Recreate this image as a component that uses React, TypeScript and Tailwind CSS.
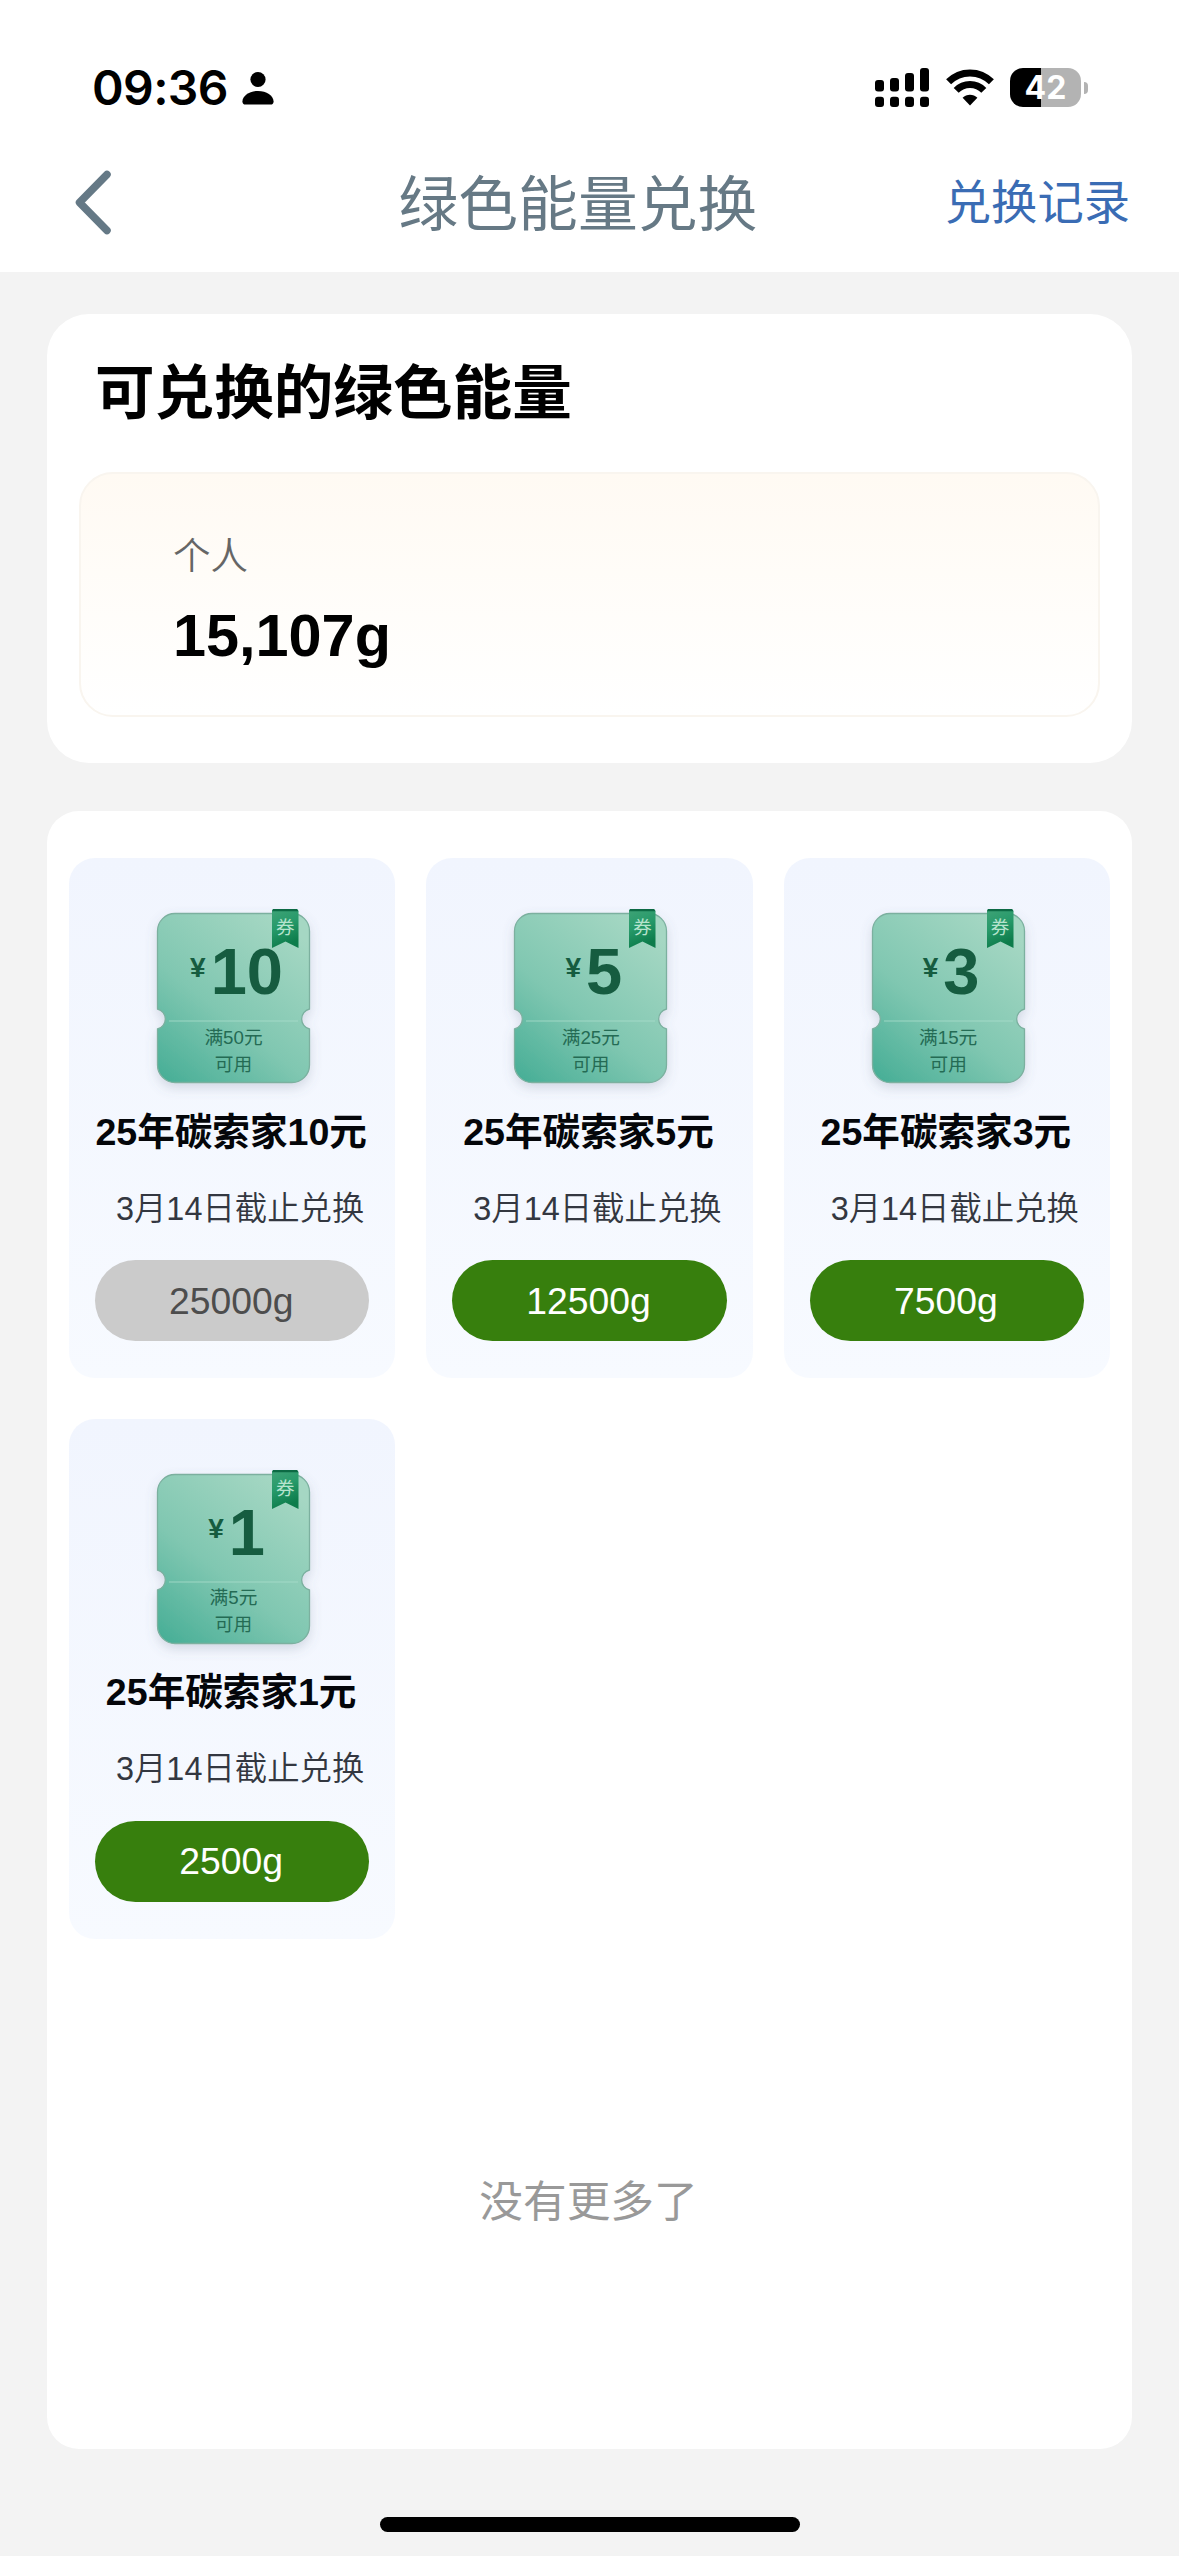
import React from 'react';

interface Coupon {
  id: number;
  amount: string;
  threshold: string;
  name: string;
  deadline: string;
  cost: string;
  disabled?: boolean;
}

const coupons: Coupon[] = [
  { id: 1, amount: '10', threshold: '满50元', name: '25年碳索家10元', deadline: '3月14日截止兑换', cost: '25000g', disabled: true },
  { id: 2, amount: '5', threshold: '满25元', name: '25年碳索家5元', deadline: '3月14日截止兑换', cost: '12500g' },
  { id: 3, amount: '3', threshold: '满15元', name: '25年碳索家3元', deadline: '3月14日截止兑换', cost: '7500g' },
  { id: 4, amount: '1', threshold: '满5元', name: '25年碳索家1元', deadline: '3月14日截止兑换', cost: '2500g' },
];

const StatusBar = () => (
  <div className="flex h-[140px] items-start justify-between pl-[92px] pr-[91px] pt-[63px]">
    <div className="flex items-center">
      <span className="font-['Inter'] text-[48px] font-semibold leading-[50px] tracking-[-0.6px] text-black">09:36</span>
      <svg className="ml-[14px]" width="32" height="36" viewBox="0 0 32 36">
        <circle cx="16" cy="9.5" r="7.6" fill="#000" />
        <path d="M3.5 34.5C1.5 34.5 0.4 33.4 0.4 31.4C0.8 25.6 7.4 21 16 21S31.2 25.6 31.6 31.4C31.6 33.4 30.5 34.5 28.5 34.5Z" fill="#000" />
      </svg>
    </div>
    <div className="flex items-start pt-[5px]">
      <svg width="54" height="40" viewBox="0 0 54 40">
        <rect x="0" y="12" width="9" height="11.5" rx="3" />
        <rect x="15" y="10" width="9" height="13.5" rx="3" />
        <rect x="30" y="5" width="9" height="18.5" rx="3" />
        <rect x="45" y="0" width="9" height="23.5" rx="3" />
        {[0, 15, 30, 45].map(x => (
          <rect key={x} x={x} y="28.7" width="9" height="10.3" rx="3" />
        ))}
      </svg>
      <svg className="ml-[17px]" width="48" height="40" viewBox="0 0 48 40" fill="none" stroke="#000" strokeWidth="7">
        <path d="M2.6 13.8C14.4 1.9 33.6 1.9 45.4 13.8" />
        <path d="M10.2 22.4C17.8 14.6 30.2 14.6 37.8 22.4" />
        <path d="M24 37.4L16.6 29.8C20.6 25.8 27.4 25.8 31.4 29.8Z" fill="#000" stroke="none" />
      </svg>
      <div className="ml-[16px] flex items-center">
        <div className="flex h-[39px] w-[71px] items-center justify-center rounded-[13px] bg-[linear-gradient(to_right,#000_44%,#b3b3b3_44%)]">
          <span className="font-['Inter'] text-[32px] font-bold leading-[39px] text-white">42</span>
        </div>
        <div className="ml-[3px] h-[12px] w-[4px] rounded-r-full bg-[#b3b3b3]" />
      </div>
    </div>
  </div>
);

const NavBar = () => (
  <div className="flex h-[132px] items-start justify-between pl-[74px] pr-[49px] pt-[24px]">
    <svg className="mt-[4px]" width="40" height="68" viewBox="0 0 40 68" fill="none" stroke="#657986" strokeWidth="7.5" strokeLinecap="round" strokeLinejoin="round">
      <path d="M33 6.5L5.5 34.5L33 62.5" />
    </svg>
    <h1 className="ml-[97px] mt-[2px] text-[59.8px] leading-[80px] text-[#667985]">绿色能量兑换</h1>
    <a className="text-[46.3px] leading-[78px] text-[#3a6cb4]">兑换记录</a>
  </div>
);

const Ticket = ({ amount, threshold }: { amount: string; threshold: string }) => (
  <div className="relative ml-[88px] h-[170px] w-[153px]">
    <svg className="absolute left-0 top-0 overflow-visible" width="153" height="170" viewBox="0 0 153 170">
      <defs>
        <linearGradient id="ticketFill" x1="0.05" y1="1" x2="0.75" y2="0">
          <stop offset="0" stopColor="#47ae96" />
          <stop offset="0.45" stopColor="#80c7b1" />
          <stop offset="1" stopColor="#a5d7c3" />
        </linearGradient>
        <linearGradient id="ribbonFill" x1="0" y1="0" x2="0.3" y2="1">
          <stop offset="0" stopColor="#3fa377" />
          <stop offset="0.5" stopColor="#279a6a" />
          <stop offset="1" stopColor="#0d7c4b" />
        </linearGradient>
        <filter id="ticketShadow" x="-20%" y="-20%" width="140%" height="150%">
          <feDropShadow dx="0" dy="5" stdDeviation="6" floodColor="#5b6b86" floodOpacity="0.22" />
        </filter>
      </defs>
      <path
        d="M18 0.5H135A17.5 17.5 0 0 1 152.5 18V96A10.3 10.3 0 0 0 152.5 116V152A17.5 17.5 0 0 1 135 169.5H18A17.5 17.5 0 0 1 0.5 152V116A10.3 10.3 0 0 0 0.5 96V18A17.5 17.5 0 0 1 18 0.5Z"
        fill="url(#ticketFill)"
        stroke="#7bb09f"
        strokeWidth="1.3"
        filter="url(#ticketShadow)"
      />
      <path d="M12 108H141" stroke="#a9dccb" strokeWidth="1.4" opacity="0.55" />
      <path d="M116 -4H140L141.5 -2V35L128.5 28.5L115 35V-2Z" fill="url(#ribbonFill)" />
      <path d="M116 -4H140L141.5 -1.8H115Z" fill="#0c6a44" />
    </svg>
    <span className="absolute left-[119px] top-[4px] text-[18.5px] leading-[22px] text-[#b5e3cd]">券</span>
    <div className="relative flex flex-col items-center pt-[26px] text-[#165c40]">
      <div className="ml-[6px] flex items-start font-bold">
        <span className="mt-[15px] text-[28px] leading-[28px]">¥</span>
        <span className="ml-[5px] text-[65px] leading-[66px]">{amount}</span>
      </div>
      <div className="mt-[18.5px] flex flex-col items-center text-[18.7px] leading-[27px] text-[#246b54]">
        <span>{threshold}</span>
        <span>可用</span>
      </div>
    </div>
  </div>
);

const CouponCard = ({ coupon }: { coupon: Coupon }) => (
  <div className="flex h-[520px] flex-col rounded-[26px] bg-gradient-to-b from-[#f1f5fe] to-[#f7faff] pt-[55px]">
    <Ticket amount={coupon.amount} threshold={coupon.threshold} />
    <div className="mt-[25.5px] pr-[2px] text-center text-[37.6px] font-bold leading-[46px] text-[#04060a]">{coupon.name}</div>
    <div className="ml-[16px] mt-[34px] text-center text-[32.4px] font-[350] leading-[40px] text-[#333740]">{coupon.deadline}</div>
    <button
      className={
        coupon.disabled
          ? 'mx-[26px] mt-[31.5px] h-[81px] rounded-full bg-[#cbcbcb] pr-[2px] pt-[2px] text-[37.3px] text-[#4d4d4d]'
          : 'mx-[26px] mt-[31.5px] h-[81px] rounded-full bg-[#377f0d] pr-[2px] pt-[2px] text-[37.3px] text-white'
      }
    >
      {coupon.cost}
    </button>
  </div>
);

const App = () => {
  return (
    <div className="flex h-[2556px] w-[1179px] flex-col overflow-hidden bg-[#f3f3f3] font-['Liberation_Sans','Noto_Sans_CJK_SC',sans-serif]">
      <header className="h-[272px] bg-white">
        <StatusBar />
        <NavBar />
      </header>

      <section className="mx-[47px] mt-[42px] h-[449px] rounded-[42px] bg-white px-[32px] pt-[40px]">
        <h2 className="pl-[16px] text-[59.6px] font-bold leading-[80px] text-black">可兑换的绿色能量</h2>
        <div className="mt-[38px] h-[245px] rounded-[34px] border-2 border-[#f9f5ef] bg-gradient-to-b from-[#fffaf3] to-white pl-[92px] pt-[57px]">
          <div className="text-[37.5px] font-[350] leading-[50px] text-[#666]">个人</div>
          <div className="mt-[20px] text-[59.4px] font-bold leading-[70px] text-black">15,107g</div>
        </div>
      </section>

      <section className="mx-[47px] mt-[48px] h-[1638px] rounded-[32px] bg-white px-[22px] pt-[47px]">
        <div className="grid grid-cols-3 gap-x-[31px] gap-y-[40.5px]">
          {coupons.map(coupon => (
            <CouponCard key={coupon.id} coupon={coupon} />
          ))}
        </div>
        <p className="mt-[233px] pr-[2px] text-center text-[43.7px] leading-[60px] text-[#999]">没有更多了</p>
      </section>

      <div className="mx-auto mt-[68px] h-[15px] w-[420px] rounded-full bg-black" />
    </div>
  );
};

export default App;
